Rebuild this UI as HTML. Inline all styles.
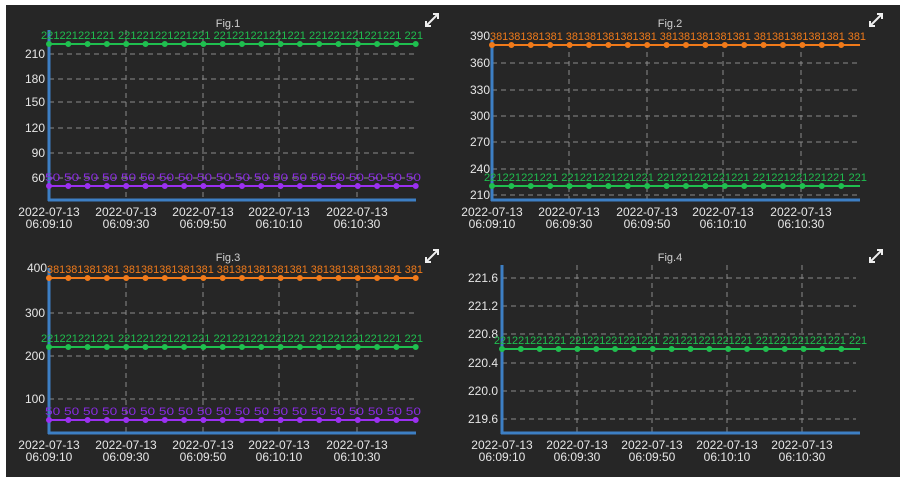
<!DOCTYPE html>
<html><head><meta charset="utf-8"><style>
html,body{margin:0;padding:0;background:#fff;width:906px;height:482px;overflow:hidden}
svg{position:absolute;left:0;top:0}
text{font-family:"Liberation Sans",sans-serif}
.t{fill:#e6e6e6;font-size:12px}
.ti{fill:#cfcfcf;font-size:11px}
.g{stroke:#8a8a8a;stroke-width:1;stroke-dasharray:5 4}
.ax{stroke:#3d7fc4;stroke-width:3}
</style></head><body>
<svg width="906" height="482" viewBox="0 0 906 482">
<rect x="6" y="5" width="894" height="472" fill="#262626"/>
<defs>
<g id="icon"><path d="M-6 6 L6 -6 M1 -6 H6 V-1 M-6 1 V6 H-1" stroke="#eee" stroke-width="2" fill="none"/></g>
</defs>

<!-- Chart 1 -->
<g>
<text class="ti" x="228" y="27" text-anchor="middle">Fig.1</text>
<use href="#icon" x="432" y="20"/>
<g class="g"><line x1="49" y1="54" x2="416" y2="54"/><line x1="49" y1="79" x2="416" y2="79"/><line x1="49" y1="102" x2="416" y2="102"/><line x1="49" y1="128" x2="416" y2="128"/><line x1="49" y1="153" x2="416" y2="153"/><line x1="49" y1="178" x2="416" y2="178"/>
<line x1="126" y1="30" x2="126" y2="200"/><line x1="203" y1="30" x2="203" y2="200"/><line x1="279" y1="30" x2="279" y2="200"/><line x1="357" y1="30" x2="357" y2="200"/></g>
<g class="t" text-anchor="end"><text x="45" y="58">210</text><text x="45" y="83">180</text><text x="45" y="106">150</text><text x="45" y="132">120</text><text x="45" y="157">90</text><text x="45" y="182">60</text></g>
<line x1="49" y1="30" x2="49" y2="201" class="ax"/><line x1="48" y1="200" x2="416" y2="200" class="ax"/>
<line x1="49" y1="44" x2="416" y2="44" stroke="#1fbf4f" stroke-width="2"/>
<line x1="49" y1="44" x2="416" y2="44" stroke="#1fbf4f" stroke-width="6" stroke-linecap="round" stroke-dasharray="0 19.3"/>
<text x="41" y="39" fill="#1fbf4f" font-size="11" textLength="382" lengthAdjust="spacingAndGlyphs">221221221221 221221221221221 221221221221221 221221221221221 221</text>
<line x1="49" y1="186" x2="416" y2="186" stroke="#9b30f0" stroke-width="2"/>
<line x1="49" y1="186" x2="416" y2="186" stroke="#9b30f0" stroke-width="6" stroke-linecap="round" stroke-dasharray="0 19.3"/>
<text x="45" y="181" fill="#8a2be2" font-size="11" textLength="376" lengthAdjust="spacingAndGlyphs">50 50 50 50 50 50 50 50 50 50 50 50 50 50 50 50 50 50 50 50</text>
<g class="t" text-anchor="middle"><text x="49" y="216">2022-07-13</text><text x="49" y="228">06:09:10</text><text x="126" y="216">2022-07-13</text><text x="126" y="228">06:09:30</text><text x="203" y="216">2022-07-13</text><text x="203" y="228">06:09:50</text><text x="279" y="216">2022-07-13</text><text x="279" y="228">06:10:10</text><text x="357" y="216">2022-07-13</text><text x="357" y="228">06:10:30</text></g>
</g>

<!-- Chart 2 -->
<g>
<text class="ti" x="670" y="27" text-anchor="middle">Fig.2</text>
<use href="#icon" x="876" y="20"/>
<g class="g"><line x1="492" y1="63" x2="860" y2="63"/><line x1="492" y1="90" x2="860" y2="90"/><line x1="492" y1="116" x2="860" y2="116"/><line x1="492" y1="142" x2="860" y2="142"/><line x1="492" y1="169" x2="860" y2="169"/><line x1="492" y1="195" x2="860" y2="195"/>
<line x1="569" y1="52" x2="569" y2="200"/><line x1="647" y1="52" x2="647" y2="200"/><line x1="723" y1="52" x2="723" y2="200"/><line x1="801" y1="52" x2="801" y2="200"/></g>
<g class="t" text-anchor="end"><text x="490" y="40">390</text><text x="490" y="67">360</text><text x="490" y="94">330</text><text x="490" y="120">300</text><text x="490" y="146">270</text><text x="490" y="173">240</text><text x="490" y="199">210</text></g>
<line x1="492" y1="40" x2="492" y2="201" class="ax"/><line x1="491" y1="200" x2="860" y2="200" class="ax"/>
<line x1="492" y1="45" x2="860" y2="45" stroke="#f07a1a" stroke-width="2"/>
<line x1="492" y1="45" x2="860" y2="45" stroke="#f07a1a" stroke-width="6" stroke-linecap="round" stroke-dasharray="0 19.4"/>
<text x="490" y="40" fill="#f07a1a" font-size="11" textLength="376" lengthAdjust="spacingAndGlyphs">381381381381 381381381381381 381381381381381 381381381381381 381</text>
<line x1="492" y1="186" x2="860" y2="186" stroke="#1fbf4f" stroke-width="2"/>
<line x1="492" y1="186" x2="860" y2="186" stroke="#1fbf4f" stroke-width="6" stroke-linecap="round" stroke-dasharray="0 19.4"/>
<text x="484" y="181" fill="#1fbf4f" font-size="11" textLength="383" lengthAdjust="spacingAndGlyphs">221221221221 221221221221221 221221221221221 221221221221221 221</text>
<g class="t" text-anchor="middle"><text x="492" y="216">2022-07-13</text><text x="492" y="228">06:09:10</text><text x="569" y="216">2022-07-13</text><text x="569" y="228">06:09:30</text><text x="647" y="216">2022-07-13</text><text x="647" y="228">06:09:50</text><text x="723" y="216">2022-07-13</text><text x="723" y="228">06:10:10</text><text x="801" y="216">2022-07-13</text><text x="801" y="228">06:10:30</text></g>
</g>

<!-- Chart 3 -->
<g>
<text class="ti" x="228" y="261" text-anchor="middle">Fig.3</text>
<use href="#icon" x="432" y="256"/>
<g class="g"><line x1="49" y1="313" x2="416" y2="313"/><line x1="49" y1="356" x2="416" y2="356"/><line x1="49" y1="399" x2="416" y2="399"/>
<line x1="126" y1="283" x2="126" y2="433"/><line x1="203" y1="283" x2="203" y2="433"/><line x1="279" y1="283" x2="279" y2="433"/><line x1="357" y1="283" x2="357" y2="433"/></g>
<g class="t" text-anchor="end"><text x="47" y="272">400</text><text x="45" y="317">300</text><text x="45" y="360">200</text><text x="45" y="403">100</text></g>
<line x1="49" y1="268" x2="49" y2="434" class="ax"/><line x1="48" y1="433" x2="416" y2="433" class="ax"/>
<line x1="49" y1="278" x2="416" y2="278" stroke="#f07a1a" stroke-width="2"/>
<line x1="49" y1="278" x2="416" y2="278" stroke="#f07a1a" stroke-width="6" stroke-linecap="round" stroke-dasharray="0 19.3"/>
<text x="47" y="273" fill="#f07a1a" font-size="11" textLength="376" lengthAdjust="spacingAndGlyphs">381381381381 381381381381381 381381381381381 381381381381381 381</text>
<line x1="49" y1="347" x2="416" y2="347" stroke="#1fbf4f" stroke-width="2"/>
<line x1="49" y1="347" x2="416" y2="347" stroke="#1fbf4f" stroke-width="6" stroke-linecap="round" stroke-dasharray="0 19.3"/>
<text x="41" y="342" fill="#1fbf4f" font-size="11" textLength="382" lengthAdjust="spacingAndGlyphs">221221221221 221221221221221 221221221221221 221221221221221 221</text>
<line x1="49" y1="420" x2="416" y2="420" stroke="#9b30f0" stroke-width="2"/>
<line x1="49" y1="420" x2="416" y2="420" stroke="#9b30f0" stroke-width="6" stroke-linecap="round" stroke-dasharray="0 19.3"/>
<text x="45" y="415" fill="#8a2be2" font-size="11" textLength="376" lengthAdjust="spacingAndGlyphs">50 50 50 50 50 50 50 50 50 50 50 50 50 50 50 50 50 50 50 50</text>
<g class="t" text-anchor="middle"><text x="49" y="449">2022-07-13</text><text x="49" y="461">06:09:10</text><text x="126" y="449">2022-07-13</text><text x="126" y="461">06:09:30</text><text x="203" y="449">2022-07-13</text><text x="203" y="461">06:09:50</text><text x="279" y="449">2022-07-13</text><text x="279" y="461">06:10:10</text><text x="357" y="449">2022-07-13</text><text x="357" y="461">06:10:30</text></g>
</g>

<!-- Chart 4 -->
<g>
<text class="ti" x="670" y="261" text-anchor="middle">Fig.4</text>
<use href="#icon" x="876" y="256"/>
<g class="g"><line x1="502" y1="278" x2="856" y2="278"/><line x1="502" y1="306" x2="856" y2="306"/><line x1="502" y1="334" x2="856" y2="334"/><line x1="502" y1="363" x2="856" y2="363"/><line x1="502" y1="391" x2="856" y2="391"/><line x1="502" y1="419" x2="856" y2="419"/>
<line x1="577" y1="265" x2="577" y2="433"/><line x1="652" y1="265" x2="652" y2="433"/><line x1="727" y1="265" x2="727" y2="433"/><line x1="802" y1="265" x2="802" y2="433"/></g>
<g class="t" text-anchor="end"><text x="498" y="282">221.6</text><text x="498" y="310">221.2</text><text x="498" y="338">220.8</text><text x="498" y="367">220.4</text><text x="498" y="395">220.0</text><text x="498" y="423">219.6</text></g>
<line x1="502" y1="265" x2="502" y2="434" class="ax"/><line x1="501" y1="433" x2="860" y2="433" class="ax"/>
<line x1="502" y1="349" x2="860" y2="349" stroke="#1fbf4f" stroke-width="2"/>
<line x1="502" y1="349" x2="860" y2="349" stroke="#1fbf4f" stroke-width="6" stroke-linecap="round" stroke-dasharray="0 18.85"/>
<text x="494" y="344" fill="#1fbf4f" font-size="11" textLength="373" lengthAdjust="spacingAndGlyphs">221221221221 221221221221221 221221221221221 221221221221221 221</text>
<g class="t" text-anchor="middle"><text x="502" y="449">2022-07-13</text><text x="502" y="461">06:09:10</text><text x="577" y="449">2022-07-13</text><text x="577" y="461">06:09:30</text><text x="652" y="449">2022-07-13</text><text x="652" y="461">06:09:50</text><text x="727" y="449">2022-07-13</text><text x="727" y="461">06:10:10</text><text x="802" y="449">2022-07-13</text><text x="802" y="461">06:10:30</text></g>
</g>
</svg>
</body></html>
